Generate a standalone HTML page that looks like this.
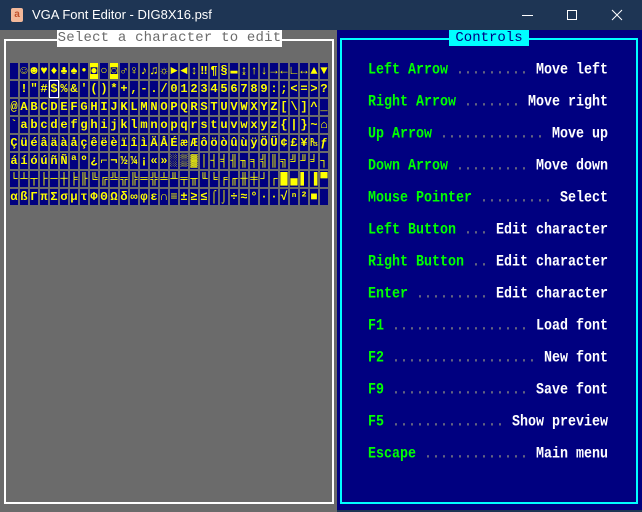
<!DOCTYPE html>
<html><head><meta charset="utf-8"><style>
*{margin:0;padding:0;box-sizing:border-box}
body{width:642px;height:512px;overflow:hidden;background:#1e3554;position:relative;font-family:"Liberation Mono","DejaVu Sans Mono",monospace}
#tb{position:absolute;left:0;top:0;width:642px;height:30px;background:#1e3554;color:#fff;font:13px "Liberation Sans",sans-serif}
#tb .ic{position:absolute;left:11px;top:8px;width:12px;height:14px;background:#f2b89a;border-radius:2px;color:#c0502a;font:bold 10px "Liberation Sans";text-align:center;line-height:13px}
#tb .t{position:absolute;left:32px;top:7px}
#left{position:absolute;left:0;top:30px;width:337px;height:482px;background:#6b6b6b}
#lb{position:absolute;left:4px;top:39px;width:330px;height:465px;border:2px solid #fff}
#lt{position:absolute;left:57px;top:30px;width:225px;height:17px;background:#fff;color:#6b6b6b;font-size:14px;line-height:17px;text-align:center;white-space:pre;letter-spacing:0.2px}
#right{position:absolute;left:337px;top:30px;width:305px;height:480px;background:#000080}
#rb{position:absolute;left:340px;top:38px;width:298px;height:466px;border:2px solid #00ffff}
#rt{position:absolute;left:449px;top:30px;width:80px;height:16px;background:#00ffff;color:#000080;font-size:14px;line-height:16px;text-align:center}
.row{position:absolute;left:10px;height:16px;white-space:nowrap;font-size:12px;font-weight:bold;line-height:16px;color:#ff0}
.row i{display:inline-block;font-style:normal;width:8px;height:16px;margin-right:2px;background:#000080;text-align:center;overflow:hidden;vertical-align:top}
.row i.inv{background:#ff0;color:#000080}
.row i.sel{outline:1px solid #fff}
.ln{position:absolute;left:368px;width:240px;font-size:13.33px;font-weight:bold;white-space:pre;line-height:16px;transform:scaleY(1.15);transform-origin:0 50%}
.g{color:#00ff00}.d{color:#808080;font-weight:normal}.w{color:#fff}
</style></head><body>
<div id="tb"><div class="ic">a</div><div class="t">VGA Font Editor - DIG8X16.psf</div>
<svg style="position:absolute;left:500px;top:0" width="142" height="30"><line x1="22" y1="15.5" x2="33" y2="15.5" stroke="#fff"/><rect x="67.5" y="10.5" width="9" height="9" fill="none" stroke="#fff"/><path d="M112 10 L122 20 M122 10 L112 20" stroke="#fff"/></svg></div>
<div id="left"></div><div id="lb"></div><div id="lt">Select a character to edit</div>
<div class="row" style="top:63px"><i></i><i>☺</i><i>☻</i><i>♥</i><i>♦</i><i>♣</i><i>♠</i><i>•</i><i class="inv">◘</i><i>○</i><i class="inv">◙</i><i>♂</i><i>♀</i><i>♪</i><i>♫</i><i>☼</i><i>►</i><i>◄</i><i>↕</i><i>‼</i><i>¶</i><i>§</i><i>▬</i><i>↨</i><i>↑</i><i>↓</i><i>→</i><i>←</i><i>∟</i><i>↔</i><i>▲</i><i>▼</i></div>
<div class="row" style="top:81px"><i></i><i>!</i><i>"</i><i>#</i><i class="sel">$</i><i>%</i><i>&amp;</i><i>'</i><i>(</i><i>)</i><i>*</i><i>+</i><i>,</i><i>-</i><i>.</i><i>/</i><i>0</i><i>1</i><i>2</i><i>3</i><i>4</i><i>5</i><i>6</i><i>7</i><i>8</i><i>9</i><i>:</i><i>;</i><i>&lt;</i><i>=</i><i>&gt;</i><i>?</i></div>
<div class="row" style="top:99px"><i>@</i><i>A</i><i>B</i><i>C</i><i>D</i><i>E</i><i>F</i><i>G</i><i>H</i><i>I</i><i>J</i><i>K</i><i>L</i><i>M</i><i>N</i><i>O</i><i>P</i><i>Q</i><i>R</i><i>S</i><i>T</i><i>U</i><i>V</i><i>W</i><i>X</i><i>Y</i><i>Z</i><i>[</i><i>\</i><i>]</i><i>^</i><i>_</i></div>
<div class="row" style="top:117px"><i>`</i><i>a</i><i>b</i><i>c</i><i>d</i><i>e</i><i>f</i><i>g</i><i>h</i><i>i</i><i>j</i><i>k</i><i>l</i><i>m</i><i>n</i><i>o</i><i>p</i><i>q</i><i>r</i><i>s</i><i>t</i><i>u</i><i>v</i><i>w</i><i>x</i><i>y</i><i>z</i><i>{</i><i>|</i><i>}</i><i>~</i><i>⌂</i></div>
<div class="row" style="top:135px"><i>Ç</i><i>ü</i><i>é</i><i>â</i><i>ä</i><i>à</i><i>å</i><i>ç</i><i>ê</i><i>ë</i><i>è</i><i>ï</i><i>î</i><i>ì</i><i>Ä</i><i>Å</i><i>É</i><i>æ</i><i>Æ</i><i>ô</i><i>ö</i><i>ò</i><i>û</i><i>ù</i><i>ÿ</i><i>Ö</i><i>Ü</i><i>¢</i><i>£</i><i>¥</i><i>₧</i><i>ƒ</i></div>
<div class="row" style="top:153px"><i>á</i><i>í</i><i>ó</i><i>ú</i><i>ñ</i><i>Ñ</i><i>ª</i><i>º</i><i>¿</i><i>⌐</i><i>¬</i><i>½</i><i>¼</i><i>¡</i><i>«</i><i>»</i><i>░</i><i>▒</i><i>▓</i><i>│</i><i>┤</i><i>╡</i><i>╢</i><i>╖</i><i>╕</i><i>╣</i><i>║</i><i>╗</i><i>╝</i><i>╜</i><i>╛</i><i>┐</i></div>
<div class="row" style="top:171px"><i>└</i><i>┴</i><i>┬</i><i>├</i><i>─</i><i>┼</i><i>╞</i><i>╟</i><i>╚</i><i>╔</i><i>╩</i><i>╦</i><i>╠</i><i>═</i><i>╬</i><i>╧</i><i>╨</i><i>╤</i><i>╥</i><i>╙</i><i>╘</i><i>╒</i><i>╓</i><i>╫</i><i>╪</i><i>┘</i><i>┌</i><i>█</i><i>▄</i><i>▌</i><i>▐</i><i>▀</i></div>
<div class="row" style="top:189px"><i>α</i><i>ß</i><i>Γ</i><i>π</i><i>Σ</i><i>σ</i><i>µ</i><i>τ</i><i>Φ</i><i>Θ</i><i>Ω</i><i>δ</i><i>∞</i><i>φ</i><i>ε</i><i>∩</i><i>≡</i><i>±</i><i>≥</i><i>≤</i><i>⌠</i><i>⌡</i><i>÷</i><i>≈</i><i>°</i><i>∙</i><i>·</i><i>√</i><i>ⁿ</i><i>²</i><i>■</i><i></i></div>
<div id="right"></div><div id="rb"></div><div id="rt">Controls</div>
<div class="ln" style="top:63px"><span class="g">Left Arrow</span> <span class="d">.........</span> <span class="w">Move left</span></div>
<div class="ln" style="top:95px"><span class="g">Right Arrow</span> <span class="d">.......</span> <span class="w">Move right</span></div>
<div class="ln" style="top:127px"><span class="g">Up Arrow</span> <span class="d">.............</span> <span class="w">Move up</span></div>
<div class="ln" style="top:159px"><span class="g">Down Arrow</span> <span class="d">.........</span> <span class="w">Move down</span></div>
<div class="ln" style="top:191px"><span class="g">Mouse Pointer</span> <span class="d">.........</span> <span class="w">Select</span></div>
<div class="ln" style="top:223px"><span class="g">Left Button</span> <span class="d">...</span> <span class="w">Edit character</span></div>
<div class="ln" style="top:255px"><span class="g">Right Button</span> <span class="d">..</span> <span class="w">Edit character</span></div>
<div class="ln" style="top:287px"><span class="g">Enter</span> <span class="d">.........</span> <span class="w">Edit character</span></div>
<div class="ln" style="top:319px"><span class="g">F1</span> <span class="d">.................</span> <span class="w">Load font</span></div>
<div class="ln" style="top:351px"><span class="g">F2</span> <span class="d">..................</span> <span class="w">New font</span></div>
<div class="ln" style="top:383px"><span class="g">F9</span> <span class="d">.................</span> <span class="w">Save font</span></div>
<div class="ln" style="top:415px"><span class="g">F5</span> <span class="d">..............</span> <span class="w">Show preview</span></div>
<div class="ln" style="top:447px"><span class="g">Escape</span> <span class="d">.............</span> <span class="w">Main menu</span></div>
</body></html>
